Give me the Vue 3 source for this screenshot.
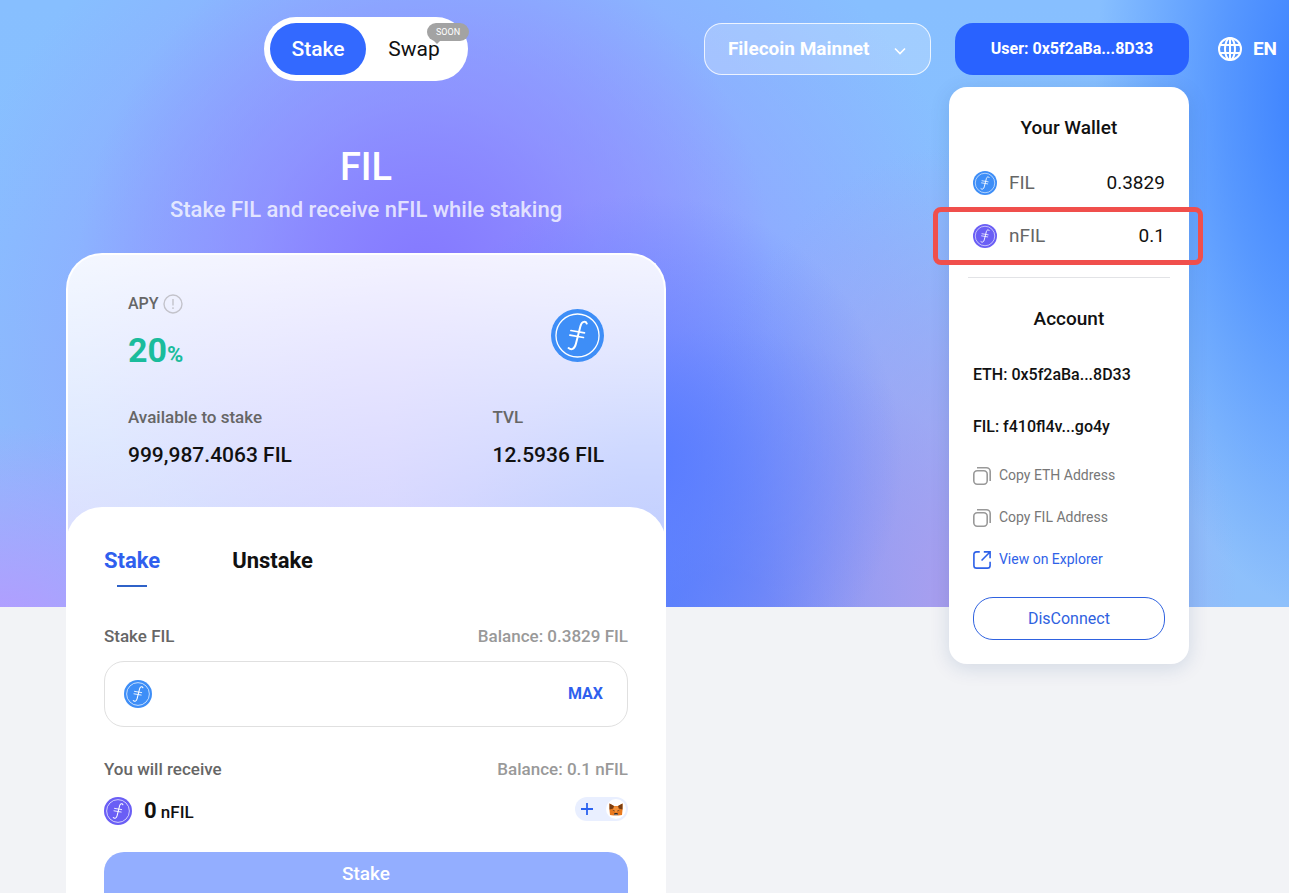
<template>
  <div class="page">
    <svg class="sprite" aria-hidden="true">
      <symbol id="coin" viewBox="0 0 160 160">
        <circle cx="80" cy="80" r="80" fill="currentColor" />
        <circle cx="80" cy="80" r="65" fill="none" stroke="#fff" stroke-width="4" />
        <g fill="none" stroke="#fff" stroke-linecap="round">
          <path
            stroke-width="6"
            d="M108 44C105 36 93 36 89 51L75 106C71 122 61 125 53 118"
          />
          <path stroke-width="5" d="M60 65l41 7M57 79l41 7" />
        </g>
      </symbol>
      <symbol id="copy" viewBox="0 0 18 18">
        <g fill="none" stroke="#999" stroke-width="1.6">
          <rect x="0.8" y="3.8" width="13.4" height="13.4" rx="3.4" />
          <path d="M4 .8h9.4a3.8 3.8 0 0 1 3.8 3.8V14" />
        </g>
      </symbol>
      <symbol id="explore" viewBox="0 0 20 20">
        <g fill="none" stroke="currentColor" stroke-width="1.8">
          <path d="M7.5 1H4a3 3 0 0 0-3 3v12a3 3 0 0 0 3 3h12a3 3 0 0 0 3-3v-4" />
          <path d="M12 1h7v7M18.600 1.400 9.500 10.500" />
        </g>
      </symbol>
    </svg>

    <div class="hero-bg"></div>

    <header class="header">
      <nav class="switch-wrap">
        <div class="switch">
          <button type="button" class="switch-item active">Stake</button>
          <button type="button" class="switch-item">
            Swap
            <span class="soon">SOON</span>
          </button>
        </div>
      </nav>

      <div class="actions">
        <div class="network">
          <select v-model="network" aria-label="Network">
            <option>Filecoin Mainnet</option>
          </select>
          <svg class="chevron" viewBox="0 0 12 8">
            <path
              d="M1 1.500l5 5 5-5"
              fill="none"
              stroke="#fff"
              stroke-width="1.6"
            />
          </svg>
        </div>

        <div class="user">
          <button type="button" class="user-btn">User: {{ ethAddress }}</button>

          <section class="wallet">
            <h2>Your Wallet</h2>
            <div
              v-for="token in tokens"
              :key="token.name"
              class="token"
              :class="{ marked: token.marked }"
            >
              <svg class="coin" :class="token.color"><use href="#coin" /></svg>
              <span class="token-name">{{ token.name }}</span>
              <span>{{ token.amount }}</span>
            </div>
            <hr />
            <h2>Account</h2>
            <p class="address">ETH: {{ ethAddress }}</p>
            <p class="address">FIL: {{ filAddress }}</p>
            <button type="button" class="link">
              <svg><use href="#copy" /></svg>Copy ETH Address
            </button>
            <button type="button" class="link">
              <svg><use href="#copy" /></svg>Copy FIL Address
            </button>
            <a href="#" class="link blue">
              <svg><use href="#explore" /></svg>View on Explorer
            </a>
            <button type="button" class="disconnect">DisConnect</button>
          </section>
        </div>

        <button type="button" class="lang">
          <svg viewBox="0 0 24 24">
            <g fill="none" stroke="#fff" stroke-width="2">
              <circle cx="12" cy="12" r="11" />
              <ellipse cx="12" cy="12" rx="5" ry="11" />
              <path d="M12 1v22M2 8h20M2 16h20" />
            </g>
          </svg>
          EN
        </button>
      </div>
    </header>

    <main class="main">
      <h1>FIL</h1>
      <p class="subtitle">Stake FIL and receive nFIL while staking</p>

      <section class="stats">
        <div class="stats-row">
          <div>
            <div class="label apy">
              APY
              <svg viewBox="0 0 20 20">
                <g fill="none" stroke="#c3c3cb" stroke-width="1.4">
                  <circle cx="10" cy="10" r="9" />
                  <path d="M10 5v6.500M10 13.200v1.800" />
                </g>
              </svg>
            </div>
            <div class="rate">20<small>%</small></div>
          </div>
          <svg class="coin big"><use href="#coin" /></svg>
        </div>
        <div class="stats-row">
          <div>
            <div class="label">Available to stake</div>
            <div class="value">999,987.4063 FIL</div>
          </div>
          <div>
            <div class="label">TVL</div>
            <div class="value">12.5936 FIL</div>
          </div>
        </div>
      </section>

      <form class="panel" @submit.prevent>
        <div class="tabs">
          <button
            v-for="item in tabs"
            :key="item"
            type="button"
            class="tab"
            :class="{ active: item === tab }"
            @click="tab = item"
          >
            {{ item }}
          </button>
        </div>

        <div class="row">
          <label for="amount">Stake FIL</label>
          <span class="balance">Balance: 0.3829 FIL</span>
        </div>
        <div class="field">
          <svg class="coin medium"><use href="#coin" /></svg>
          <input id="amount" v-model="amount" type="text" />
          <button type="button" class="max">MAX</button>
        </div>

        <div class="row">
          <span>You will receive</span>
          <span class="balance">Balance: 0.1 nFIL</span>
        </div>
        <div class="receive">
          <svg class="coin medium purple"><use href="#coin" /></svg>
          <div class="sum"><strong>0</strong> nFIL</div>
          <button type="button" class="add" aria-label="Add nFIL to MetaMask">
            <svg class="plus" viewBox="0 0 12 12">
              <path d="M6 0v12M0 6h12" stroke="#2b62f0" stroke-width="1.8" />
            </svg>
            <span class="fox">
              <svg viewBox="0 0 28 26">
                <path fill="#e8791f" d="M1 1l9 5h8l9-5v13l-1 10-7 1H9l-7-1-1-10z" />
                <path fill="#7a3e12" d="M1 1l9 5-1 5-8 2zM27 1l-9 5 1 5 8 2z" />
                <path fill="#f5923a" d="M10 7h8l2 7-6 5-6-5z" />
                <path fill="#2d2a2a" d="M7 14l4 1v2zM21 14l-4 1v2zM11 20h6l1 4h-8z" />
                <path fill="#d5bfb2" d="M9 25l2-2h6l2 2z" />
              </svg>
            </span>
          </button>
        </div>

        <button type="submit" class="submit">Stake</button>
      </form>
    </main>
  </div>
</template>

<script setup>
import { ref } from "vue";

const network = ref("Filecoin Mainnet");
const amount = ref("");
const tab = ref("Stake");
const tabs = ["Stake", "Unstake"];

const ethAddress = "0x5f2aBa...8D33";
const filAddress = "f410fl4v...go4y";

const tokens = [
  { name: "FIL", amount: "0.3829" },
  { name: "nFIL", amount: "0.1", color: "purple", marked: true },
];
</script>

<style>
body {
  margin: 0;
  background: #f2f3f6;
}
</style>

<style scoped>
.page {
  position: relative;
  height: 100vh;
  overflow: hidden;
  font-family: Roboto, "Liberation Sans", sans-serif;
  font-size: 16px;
  font-weight: 500;
  line-height: 24px;
  color: #111;
}

.page * {
  box-sizing: border-box;
}

h1,
h2,
p {
  margin: 0;
  font-weight: 500;
}

button,
input,
select {
  padding: 0;
  border: none;
  background: none;
  font: inherit;
  color: inherit;
}

button {
  cursor: pointer;
}

.sprite {
  position: absolute;
  width: 0;
  height: 0;
}

.hero-bg {
  position: absolute;
  top: 0;
  left: 0;
  right: 0;
  height: 607px;
  background:
    radial-gradient(ellipse 18% 85% at 103% 16%, #357cff, #3a80ffa0 45%, #3a80ff00),
    radial-gradient(ellipse 20% 44% at 50% 76%, #5a7dff 8%, #5a7dff80 50%, #5a7dff00),
    radial-gradient(ellipse 27% 60% at 33% 46%, #857aff 5%, #8c84ff90 50%, #8c84ff00),
    radial-gradient(ellipse 20% 36% at 0% 106%, #b29cff 10%, #b29cff00),
    radial-gradient(ellipse 22% 76% at 74% 100%, #a99dee, #a79eeea0 40%, #a79eee00),
    radial-gradient(ellipse 22% 50% at 56% 104%, #5f83fa 20%, #5f83fa00),
    radial-gradient(ellipse 42% 90% at 36% 62%, #9498ff 20%, #9498ff00),
    linear-gradient(#87bfff, #88c0ff 40%, #8ec0fb);
}

.header {
  position: relative;
  z-index: 2;
  display: flex;
  align-items: center;
  justify-content: space-between;
  padding: 17px 12px 0 66px;
}

.switch-wrap {
  display: flex;
  justify-content: center;
  width: 600px;
}

.switch {
  display: flex;
  padding: 6px;
  border-radius: 32px;
  background: #fff;
}

.switch-item {
  position: relative;
  width: 96px;
  height: 52px;
  border-radius: 26px;
  font-size: 21px;
  font-weight: 400;
}

.switch-item.active {
  background: #3369ff;
  color: #fff;
  font-weight: 500;
}

.soon {
  position: absolute;
  top: 0;
  right: -7px;
  width: 42px;
  border-radius: 9px;
  background: #a3a3a3;
  color: #fff;
  font-size: 9px;
  line-height: 18px;
}

.soon::after {
  content: "";
  position: absolute;
  top: 17px;
  left: 6px;
  border: 4px solid transparent;
  border-top-color: #a3a3a3;
  border-bottom: none;
}

.actions {
  display: flex;
  align-items: center;
}

.network {
  position: relative;
  width: 227px;
  margin-right: 24px;
}

.network select {
  width: 100%;
  height: 52px;
  padding: 0 23px;
  border: 1px solid #fffc;
  border-radius: 18px;
  background: #ffffff38;
  color: #fff;
  font-size: 19px;
  font-weight: 700;
  appearance: none;
}

.network option {
  color: #111;
}

.chevron {
  position: absolute;
  top: 24px;
  right: 25px;
  width: 12px;
  height: 8px;
  pointer-events: none;
}

.user {
  position: relative;
  margin-right: 29px;
}

.user-btn {
  width: 234px;
  height: 52px;
  border-radius: 18px;
  background: #2962ff;
  color: #fff;
  font-weight: 700;
}

.lang {
  display: flex;
  align-items: center;
  gap: 11px;
  color: #fff;
  font-size: 19px;
  font-weight: 700;
}

.lang svg {
  width: 24px;
  height: 24px;
}

.wallet {
  position: absolute;
  top: 64px;
  right: 0;
  width: 240px;
  padding: 24px;
  border-radius: 18px;
  background: #fff;
  box-shadow: 0 4px 20px #0f3a7824;
}

.wallet h2 {
  font-size: 19px;
  line-height: 34px;
  text-align: center;
}

.token {
  position: relative;
  display: flex;
  align-items: center;
  height: 24px;
  margin-top: 26px;
  font-size: 19px;
  font-weight: 400;
}

.token + .token {
  margin-top: 29px;
}

.token.marked::after {
  content: "";
  position: absolute;
  inset: -17px -38px -17px -40px;
  border: 5px solid #f04f4c;
  border-radius: 8px;
}

.token-name {
  flex: 1;
  margin-left: 12px;
  color: #666;
}

.wallet hr {
  height: 1px;
  margin: 29px -5px 24px;
  border: none;
  background: #e2e3e6;
}

.address {
  margin-top: 28px;
}

.wallet h2 + .address {
  margin-top: 27px;
}

.link {
  display: flex;
  align-items: center;
  gap: 8px;
  height: 24px;
  margin-top: 18px;
  color: #777;
  font-size: 14px;
  font-weight: 400;
  text-decoration: none;
}

.address + .link {
  margin-top: 24px;
}

.link svg {
  width: 18px;
  height: 18px;
  margin-top: 2px;
}

.link.blue {
  color: #2f62e8;
}

.disconnect {
  width: 100%;
  height: 43px;
  margin-top: 26px;
  border: 1px solid #2f62e0;
  border-radius: 20px;
  color: #2f62e0;
  font-weight: 400;
}

.coin {
  flex: none;
  width: 24px;
  height: 24px;
  color: #3e8ef7;
}

.coin.medium {
  width: 28px;
  height: 28px;
}

.coin.big {
  width: 53px;
  height: 53px;
  margin-top: 17px;
}

.coin.purple {
  color: #6a5ef5;
}

.main {
  position: relative;
  width: 600px;
  margin: 64px 0 0 66px;
}

h1 {
  color: #fff;
  font-size: 38px;
  line-height: 44px;
  text-align: center;
}

.subtitle {
  margin-top: 7px;
  color: #ffffffc4;
  font-size: 22px;
  line-height: 28px;
  text-align: center;
}

.stats {
  margin-top: 29px;
  padding: 37px 60px 90px;
  border: 2px solid #fff;
  border-bottom: none;
  border-radius: 36px 36px 0 0;
  background: linear-gradient(#ffffffe6, #ffffff98);
}

.stats-row {
  display: flex;
  justify-content: space-between;
}

.stats-row + .stats-row {
  margin-top: 33px;
}

.label {
  color: #666;
  font-size: 17px;
}

.apy {
  display: flex;
  align-items: center;
  gap: 4px;
  font-size: 16px;
}

.apy svg {
  width: 20px;
  height: 20px;
}

.rate {
  height: 44px;
  margin-top: 12px;
  color: #1abc9c;
  font-size: 34px;
  font-weight: 700;
  line-height: 44px;
}

.rate small {
  font-size: 22px;
}

.value {
  margin-top: 10px;
  font-size: 21px;
  line-height: 32px;
}

.panel {
  position: relative;
  margin-top: -54px;
  padding: 38px;
  border-radius: 36px 36px 0 0;
  background: #fff;
}

.tabs {
  display: flex;
  gap: 72px;
}

.tab {
  position: relative;
  padding-bottom: 10px;
  font-size: 22px;
  font-weight: 700;
  line-height: 32px;
}

.tab.active {
  color: #2f5fee;
}

.tab.active::after {
  content: "";
  position: absolute;
  bottom: 0;
  left: 50%;
  width: 30px;
  height: 2px;
  margin-left: -15px;
  background: #2f62c8;
}

.row {
  display: flex;
  justify-content: space-between;
  margin-top: 37px;
  color: #666;
  font-size: 17px;
}

.balance {
  color: #999;
}

.field {
  display: flex;
  align-items: center;
  height: 66px;
  margin-top: 13px;
  padding: 0 24px 0 19px;
  border: 1px solid #e0e0e0;
  border-radius: 20px;
}

.field + .row {
  margin-top: 30px;
}

.field input {
  flex: 1;
  min-width: 0;
  margin: 0 12px;
  outline: none;
}

.max {
  color: #2f5fee;
  font-weight: 700;
}

.receive {
  display: flex;
  align-items: flex-start;
  height: 28px;
  margin-top: 16px;
}

.sum {
  flex: 1;
  margin-left: 12px;
  font-size: 17px;
  line-height: 28px;
}

.sum strong {
  font-size: 22px;
}

.add {
  display: flex;
  align-items: center;
  justify-content: space-between;
  width: 53px;
  height: 24px;
  padding: 0 2px 0 6px;
  border-radius: 12px;
  background: #e9efff;
}

.plus {
  width: 12px;
  height: 12px;
}

.fox {
  display: flex;
  align-items: center;
  justify-content: center;
  width: 20px;
  height: 20px;
  border-radius: 50%;
  background: #fff;
}

.fox svg {
  width: 14px;
  height: 13px;
}

.submit {
  width: 100%;
  margin-top: 27px;
  padding: 10px 0 30px;
  border-radius: 20px;
  background: #93aeff;
  color: #fff;
  font-size: 19px;
}
</style>
